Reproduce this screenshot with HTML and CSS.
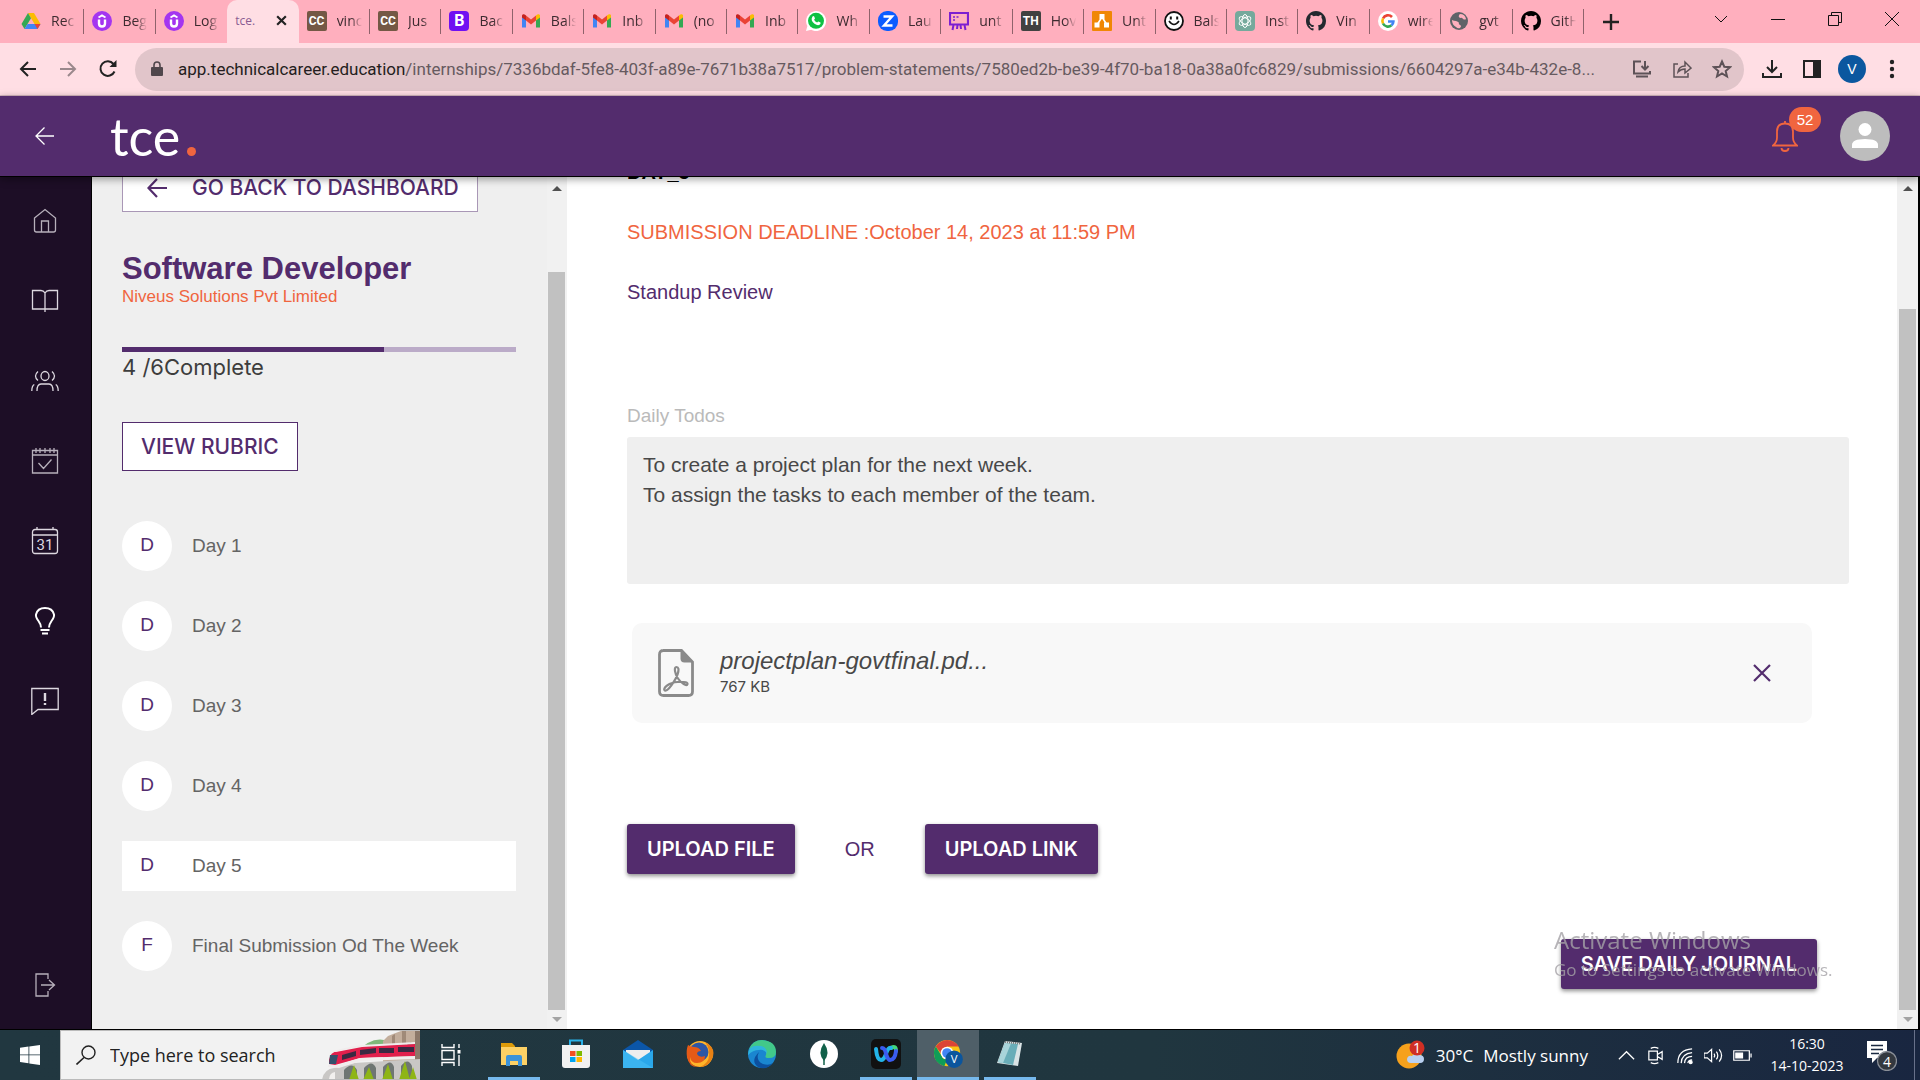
FILE: index.html
```html
<!DOCTYPE html>
<html lang="en">
<head>
<meta charset="utf-8">
<title>tce.</title>
<link rel="stylesheet" href="styles.css">
</head>
<body>
<svg class="defs" aria-hidden="true">
  <symbol id="gmail" viewBox="0 0 20 20"><path fill="#4285f4" d="M1 4v12.500h4V8z"/><path fill="#34a853" d="M19 4v12.500h-4V8z"/><path fill="#ea4335" d="M5 4.500l5 4 5-4V9.500l-5 4-5-4z"/><path fill="#c5221f" d="M1 5c0-2 2-2.500 4-.5v5L1 6.500z"/><path fill="#fbbc04" d="M19 5c0-2-2-2.500-4-.5v5l4-3z"/></symbol>
  <symbol id="udemy" viewBox="0 0 20 20"><circle cx="10" cy="10" r="10" fill="#a435f0"/><path d="M7 8.500v4q0 3 3 3t3-3v-4" fill="none" stroke="#fff" stroke-width="2.400"/><path d="M6.500 6.500L10 4.400l3.500 2.100" fill="none" stroke="#fff" stroke-width="1.800"/></symbol>
  <symbol id="github" viewBox="0 0 16 16"><path d="M8 0C3.580 0 0 3.580 0 8c0 3.540 2.290 6.530 5.470 7.590.4.070.550-.170.550-.380 0-.190-.010-.820-.010-1.490-2.010.370-2.530-.490-2.690-.940-.090-.230-.480-.940-.820-1.130-.280-.150-.680-.520-.010-.530.630-.010 1.080.580 1.230.820.720 1.210 1.870.870 2.330.660.070-.520.280-.870.510-1.070-1.780-.2-3.640-.890-3.640-3.950 0-.870.310-1.590.820-2.150-.080-.2-.360-1.020.080-2.120 0 0 .670-.210 2.200.820a7.600 7.600 0 014 0c1.530-1.040 2.200-.820 2.200-.820.440 1.100.160 1.920.080 2.120.510.560.820 1.270.820 2.150 0 3.070-1.870 3.750-3.650 3.950.290.250.540.730.540 1.480 0 1.070-.010 1.930-.010 2.200 0 .210.150.460.550.380A8 8 0 0016 8c0-4.420-3.580-8-8-8z"/></symbol>
</svg>

<header class="tabstrip">
  <div class="tabs">
    <a class="tab" href="#"><svg viewBox="0 0 20 20"><path fill="#fbbc04" d="M7 2h6l6.500 11h-6z"/><path fill="#34a853" d="M7 2l3 5.200L3.500 18 .5 13z"/><path fill="#4285f4" d="M6.500 13h13l-3 5h-13z"/><path fill="#ea4335" d="M13.500 13h6l-3 5z"/></svg><span>Rec</span></a>
    <a class="tab" href="#"><svg><use href="#udemy"/></svg><span>Beg</span></a>
    <a class="tab no-line" href="#"><svg><use href="#udemy"/></svg><span>Log</span></a>
    <a class="tab active" href="#"><span class="mini">tce.</span><svg viewBox="0 0 12 12" class="close"><path d="M2 2l8 8M10 2l-8 8" stroke="#222" stroke-width="2"/></svg></a>
    <a class="tab" href="#"><i class="fav cc">CC</i><span>vinc</span></a>
    <a class="tab" href="#"><i class="fav cc">CC</i><span>Jus</span></a>
    <a class="tab" href="#"><i class="fav boot">B</i><span>Bac</span></a>
    <a class="tab" href="#"><svg><use href="#gmail"/></svg><span>Bals</span></a>
    <a class="tab" href="#"><svg><use href="#gmail"/></svg><span>Inb</span></a>
    <a class="tab" href="#"><svg><use href="#gmail"/></svg><span>(no</span></a>
    <a class="tab" href="#"><svg><use href="#gmail"/></svg><span>Inb</span></a>
    <a class="tab" href="#"><svg viewBox="0 0 20 20"><path fill="#fff" d="M0 20l1.400-5A10 10 0 115.200 18.800z"/><circle cx="10" cy="9.800" r="8" fill="#0fc143"/><path fill="#fff" d="M6.500 5.500q1-1 1.700 0l.8 1.900-.9 1.400q1 2 3 2.800l1.200-1.200 2.200 1.100q.5 1.200-1 2.300-2 1-5-1-4.500-3.300-2-7.300z"/></svg><span>Wh</span></a>
    <a class="tab" href="#"><svg viewBox="0 0 20 20"><rect width="20" height="20" rx="9" fill="#0b5cff"/><path d="M5.500 5.500h8.500L6 14.500h8.500" fill="none" stroke="#fff" stroke-width="2.400"/></svg><span>Lau</span></a>
    <a class="tab" href="#"><svg viewBox="0 0 20 20"><path d="M1 2h18v11.500H1z" fill="none" stroke="#7c1fd1" stroke-width="2.200"/><path d="M4.500 14l-1 5M8.500 14l-.5 4M11.500 14l.5 4M15.500 14l1 5" stroke="#7c1fd1" stroke-width="2"/><path d="M4 6h2M7.500 6h2M4 9h2" stroke="#7c1fd1" stroke-width="1.600"/></svg><span>unt</span></a>
    <a class="tab" href="#"><i class="fav th">TH</i><span>Hov</span></a>
    <a class="tab" href="#"><svg viewBox="0 0 20 20"><rect width="20" height="20" rx="1" fill="#f08705"/><path d="M10 6L5 14M10 6l5 8" stroke="#fff" stroke-width="1.600"/><path fill="#fff" d="M7.500 3h5v5h-5zM2.500 11.500h5v5h-5zM12 11.500h5v5h-5z"/></svg><span>Unt</span></a>
    <a class="tab" href="#"><svg viewBox="0 0 20 20"><circle cx="10" cy="10" r="9" fill="#fff" stroke="#111" stroke-width="1.800"/><path d="M5 10q5 7 10 0" fill="none" stroke="#111" stroke-width="1.600"/><path d="M6.800 5.500v3M13.200 5.500v3" stroke="#111" stroke-width="2"/></svg><span>Bals</span></a>
    <a class="tab" href="#"><svg viewBox="0 0 20 20"><rect width="20" height="20" rx="4" fill="#75a99c"/><g fill="none" stroke="#fff"><ellipse cx="10" cy="10" rx="3" ry="6.500"/><ellipse cx="10" cy="10" rx="3" ry="6.500" transform="rotate(60 10 10)"/><ellipse cx="10" cy="10" rx="3" ry="6.500" transform="rotate(120 10 10)"/></g></svg><span>Inst</span></a>
    <a class="tab" href="#"><svg fill="#24292f"><use href="#github"/></svg><span>Vin</span></a>
    <a class="tab" href="#"><svg viewBox="0 0 20 20"><circle cx="10" cy="10" r="10" fill="#fff"/><g fill="none" stroke-width="2.600"><path stroke="#ea4335" d="M14 6A5.500 5.500 0 005 7.500"/><path stroke="#fbbc04" d="M5 7.500a5.500 5.500 0 000 5"/><path stroke="#34a853" d="M5 12.500a5.500 5.500 0 008.500 1.800"/><path stroke="#4285f4" d="M13.500 14.300q1.900-1.700 1.900-3.800H10"/></g></svg><span>wire</span></a>
    <a class="tab" href="#"><svg viewBox="0 0 20 20"><circle cx="10" cy="10" r="9" fill="#5f6368"/><path fill="#ffafbe" d="M11 3q5 0 6 5-1 1-3 0-1-2-3-1-2-1-1-3zM3 9q2 1 4 1 3 1 3 2-1 1 1 2 2 1 0 3-2 1-4-1-4-2-4-7z"/></svg><span>gvt</span></a>
    <a class="tab" href="#"><svg fill="#000"><use href="#github"/></svg><span>GitH</span></a>
  </div>
  <button class="newtab" aria-label="New tab"><svg viewBox="0 0 16 16"><path d="M8 0v16M0 8h16" stroke="#222" stroke-width="2.400"/></svg></button>
  <div class="winctl">
    <button aria-label="Search tabs"><svg viewBox="0 0 14 14"><path d="M1 4l6 6 6-6"/></svg></button>
    <button aria-label="Minimize"><svg viewBox="0 0 14 14"><path d="M0 7.500h14"/></svg></button>
    <button aria-label="Restore"><svg viewBox="0 0 14 14"><path d="M.5 3.500h10v10H.5zM3.500 3V.5h10v10H11"/></svg></button>
    <button aria-label="Close"><svg viewBox="0 0 14 14"><path d="M0 0l14 14M14 0L0 14"/></svg></button>
  </div>
</header>

<div class="toolbar">
  <button aria-label="Back"><svg viewBox="0 0 20 20"><path d="M18 10H3M10 3l-7 7 7 7"/></svg></button>
  <button aria-label="Forward" class="dim"><svg viewBox="0 0 20 20"><path d="M2 10h15M10 3l7 7-7 7"/></svg></button>
  <button aria-label="Reload"><svg viewBox="0 0 20 20"><path d="M16.500 12.500A7.300 7.300 0 1115.500 5"/><path d="M18.500 1v7h-7z" fill="#222" stroke="none"/></svg></button>
  <div class="omnibox">
    <svg class="lock" viewBox="0 0 12 16"><path fill="#50474c" d="M1 6h10q1 0 1 1v7q0 1-1 1H1q-1 0-1-1V7q0-1 1-1z"/><path d="M3 6V4q0-3 3-3t3 3v2" fill="none" stroke="#50474c" stroke-width="1.600"/></svg>
    <p class="url"><b>app.technicalcareer.education</b>/internships/7336bdaf-5fe8-403f-a89e-7671b38a7517/problem-statements/7580ed2b-be39-4f70-ba18-0a38a0fc6829/submissions/6604297a-e34b-432e-8...</p>
    <button aria-label="Install"><svg viewBox="0 0 20 20"><path d="M9 2.500H2v12h16V12M4 17.500h12M13 2v8M9.500 7l3.500 3.500L16.500 7"/></svg></button>
    <button aria-label="Share"><svg viewBox="0 0 20 20"><path d="M6 5H2v13h14v-4M6 13q1-6 7-6V3l6 6-6 5v-4q-4 0-7 3z" stroke-width="1.500"/></svg></button>
    <button aria-label="Bookmark"><svg viewBox="0 0 20 20"><path d="M10 2.500l2.300 5.200 5.700.5-4.300 3.800 1.300 5.500-5-3-5 3 1.300-5.500L2 8.200l5.700-.5z"/></svg></button>
  </div>
  <button aria-label="Downloads"><svg viewBox="0 0 20 20"><path d="M10 1v11M5 8l5 5 5-5M1 14v4h18v-4"/></svg></button>
  <button aria-label="Side panel"><svg viewBox="0 0 20 20"><path d="M2 2h16v16H2z"/><path d="M12 2h6v16h-6z" fill="#222"/></svg></button>
  <button class="profile" aria-label="Profile">V</button>
  <button class="kebab" aria-label="Menu"><svg viewBox="0 0 6 20"><g fill="#222" stroke="none"><circle cx="3" cy="3" r="2.200"/><circle cx="3" cy="10" r="2.200"/><circle cx="3" cy="17" r="2.200"/></g></svg></button>
</div>

<div class="appbar">
  <a class="back" href="#" aria-label="Back"><svg viewBox="0 0 20 20"><path d="M19 10H1M9.500 1.500L1 10l8.500 8.500" fill="none" stroke="#fff" stroke-width="1.300"/></svg></a>
  <a class="logo" href="#">tce<i></i></a>
  <button class="bell" aria-label="Notifications"><svg viewBox="0 0 26 32"><g fill="none" stroke="#f0653f" stroke-width="1.800"><path d="M1 25.500q4-3 4-8v-6q0-8 8-8t8 8v6q0 5 4 8z"/><path d="M13 3.500V1M9.500 28q0 3 3.500 3t3.500-3"/></g></svg><span class="badge">52</span></button>
  <button class="avatar" aria-label="Account"><svg viewBox="0 0 50 50"><circle cx="25" cy="18.500" r="6.500"/><path d="M12 37v-3q0-6 13-6t13 6v3z"/></svg></button>
</div>

<div class="body">
  <nav class="rail">
    <a href="#" aria-label="Home"><svg viewBox="0 0 28 28"><path d="M3.500 11L14 2.500 24.500 11v12q0 2-2 2h-17q-2 0-2-2zM10.500 25V14h7v11"/></svg></a>
    <a href="#" aria-label="Courses" class="bright"><svg viewBox="0 0 28 28"><path d="M14 6q-1.500-2.500-4-2.500H1.500V22H14m0-16q1.500-2.500 4-2.500h8.500V22H14M14 5v20"/></svg></a>
    <a href="#" aria-label="People" class="bright"><svg viewBox="0 0 28 28"><ellipse cx="14" cy="9" rx="4" ry="4.500"/><path d="M7 4.500q-5 4.500 0 9M21 4.500q5 4.500 0 9M6 24q0-7 4-7h8q4 0 4 7M.8 24q0-5 2.500-6.500M27.200 24q0-5-2.500-6.500"/></svg></a>
    <a href="#" aria-label="Tasks"><svg viewBox="0 0 28 28"><path d="M1.500 3.500h25V26h-25zM1.500 8h25M5 1v5M9 1v5M14 1v5M19 1v5M23 1v5M7.500 16l5 5.500 8-9"/></svg></a>
    <a href="#" aria-label="Calendar" class="bright"><svg viewBox="0 0 28 28"><rect x="1.500" y="2.500" width="25" height="24" rx="2.500"/><path d="M1.500 8h25M6 0v3M22 0v3"/><text x="14" y="22.500">31</text></svg></a>
    <a href="#" aria-label="Internships" class="current"><svg viewBox="0 0 28 28"><path d="M10 20.500q0-3-2.500-6.500Q4.500 10 5 7.500 6.500 1 14 1t9 6.500q.5 2.500-2.500 6.500-2.500 3.500-2.500 6.500M9.500 23h9M11 26.500h6"/></svg></a>
    <a href="#" aria-label="Feedback" class="bright"><svg viewBox="0 0 28 28"><path d="M.8 1.500h26.400v21H7L.8 27.500z"/><path d="M14 6v8M14 16v2" stroke-width="2.400"/></svg></a>
    <a href="#" aria-label="Log out" class="last"><svg viewBox="0 0 28 28"><path d="M17 8V3H5v22h12v-5M10 14h13M18 9l5.500 5-5.500 5"/></svg></a>
  </nav>

  <aside class="side">
    <div class="side-content">
      <a class="outline dash" href="#"><svg viewBox="0 0 20 20"><path d="M20 10H2M10 1L1.500 10l8.500 9" fill="none" stroke="#532c6d" stroke-width="2.200"/></svg>GO BACK TO DASHBOARD</a>
      <h1>Software Developer</h1>
      <p class="company">Niveus Solutions Pvt Limited</p>
      <div class="progress"><i style="width:66.600%"></i></div>
      <p class="complete">4 /6Complete</p>
      <button class="outline rubric">VIEW RUBRIC</button>
      <ul class="days">
        <li><a href="#"><b>D</b>Day 1</a></li>
        <li><a href="#"><b>D</b>Day 2</a></li>
        <li><a href="#"><b>D</b>Day 3</a></li>
        <li><a href="#"><b>D</b>Day 4</a></li>
        <li class="on"><a href="#"><b>D</b>Day 5</a></li>
        <li><a href="#"><b>F</b>Final Submission Od The Week</a></li>
      </ul>
    </div>
    <div class="scroll side-scroll"><i class="up"></i><i class="thumb"></i><i class="down"></i></div>
  </aside>

  <main>
    <h2>DAY_5</h2>
    <p class="deadline">SUBMISSION DEADLINE :October 14, 2023 at 11:59 PM</p>
    <p class="review">Standup Review</p>
    <label for="todos">Daily Todos</label>
    <textarea id="todos">To create a project plan for the next week.
To assign the tasks to each member of the team.</textarea>
    <div class="file">
      <svg class="pdf" viewBox="0 0 36 48"><path d="M5 1.500h18.500L34.500 13v29.500q0 4-4 4H5.500q-4 0-4-4V5.500q0-4 4-4z" fill="none" stroke="#8a8a8a" stroke-width="2.800"/><path d="M22.500 1L35 13.500h-8.500q-4 0-4-4z" fill="#8a8a8a"/><path d="M18.500 18c-3 0-1.500 7 1.500 11.500s9 8.500 9.500 5.500-12-3-18 0-6.500 7-3.500 6.500S21 27 20.500 20q-.5-2-2-2z" fill="none" stroke="#8a8a8a" stroke-width="2.200"/></svg>
      <div class="meta"><p class="fname">projectplan-govtfinal.pd...</p><p class="fsize">767 KB</p></div>
      <button aria-label="Remove file"><svg viewBox="0 0 18 18"><path d="M1 1l16 16M17 1L1 17" stroke="#532c6d" stroke-width="2.200"/></svg></button>
    </div>
    <div class="uploads"><button class="solid">UPLOAD FILE</button><span>OR</span><button class="solid">UPLOAD LINK</button></div>
    <div class="save"><button class="solid">SAVE DAILY JOURNAL</button>
      <div class="watermark"><p>Activate Windows</p><p class="small">Go to Settings to activate Windows.</p></div>
    </div>
  </main>
  <div class="scroll page-scroll"><i class="up"></i><i class="thumb"></i><i class="down"></i></div>
</div>

<footer class="taskbar">
  <button class="start" aria-label="Start"><svg viewBox="0 0 20 20"><path fill="#fff" d="M0 2.800L8.500 1.600v8H0zM9.300 1.500L20 0v9.600H9.300zM0 10.300h8.500v8L0 17.100zM9.300 10.300H20V20L9.300 18.500z"/></svg></button>
  <label class="search"><svg class="mag" viewBox="0 0 20 20"><circle cx="12.500" cy="7.500" r="6.500" fill="none" stroke="#222" stroke-width="1.400"/><path d="M8 12.500L.5 19.500" stroke="#222" stroke-width="1.600"/></svg><input type="text" placeholder="Type here to search" aria-label="Type here to search">
    <svg class="art" viewBox="0 0 98 49"><path fill="#7fb87a" d="M34 22Q50 4 66 10v12z"/><path fill="#c3ae9c" d="M61 20V10l5-5 5-2 8-3h19v49H61z"/><path fill="#a08a78" d="M70 20V5l3-2v17zM80 0h4v20h-4z"/><path fill="#8c7869" d="M93 0h5v49h-5z"/><path fill="#2b2422" d="M84 19v-4q5-7 9 0v4z"/><path fill="#c9c7c5" d="M0 49q2-11 12-12l20-5 66-4v21z"/><path fill="#f2f0ee" d="M7 49q0-7 6-8v8z"/><path fill="#6f7673" d="M22 49V39q8-9 13 0v10zM42 49V37q8-9 12 0v12zM61 49V36q8-9 11 0v13zM79 49V35q7-9 11 0v14z"/><path fill="#8eb516" d="M32 34l5 15H27zM47 36l5 13H41zM66 33l5 16H60zM83 30l5 19H77zM91 36l4 13h-8z"/><path fill="#e11f4c" d="M7 29q1-8 9-9l24-5 53-2v12l-55 2-25 7-6-1z"/><path fill="#f0ecec" d="M10 21q8-4 30-7l53-3v2l-53 3-26 5zM6 34h10l22-7 55-2v3l-54 2-22 7-11-1z"/><path fill="#34506b" d="M8 24h8l-2 9H7z"/><path fill="#3a2942" d="M20 24l14-4v5l-14 4zM38 19l16-2v5l-16 2zM57 17h15v5H57zM76 16h16v5H76z"/></svg>
  </label>
  <button class="view" aria-label="Task view"><svg viewBox="0 0 20 22"><g fill="none" stroke="#fff" stroke-width="1.400"><path d="M1 0v3.500h12V0M1 22v-3.500h12V22M1 6.500h12v9H1zM18 0v4M18 11v11"/></g><path fill="#fff" d="M16.500 6h3v3.500h-3z"/></svg></button>
  <div class="apps">
    <button class="open" aria-label="File Explorer"><svg viewBox="0 0 30 30"><path fill="#dd9b09" d="M2 4h11l3 3v5H2z"/><path fill="#fdd165" d="M2 8h26v18H2z"/><path fill="#3c93d9" d="M7 18q0-2 2-2h12q2 0 2 2v9h-4v-5h-8v5H7z"/></svg></button>
    <button aria-label="Store"><svg viewBox="0 0 30 30"><path d="M9 6V1.500h12V6" fill="none" stroke="#29b1e8" stroke-width="2"/><path fill="#f1f1f1" d="M1 6h28v20q0 3-3 3H4q-3 0-3-3z"/><path fill="#f25022" d="M9 12h5.500v5H9z"/><path fill="#7fba00" d="M15.500 12H21v5h-5.500z"/><path fill="#00a4ef" d="M9 18h5.500v5H9z"/><path fill="#ffb900" d="M15.500 18H21v5h-5.500z"/></svg></button>
    <button aria-label="Mail"><svg viewBox="0 0 30 30"><path fill="#0b56a8" d="M0 11L15 1l15 10v4H0z"/><path fill="#eee" d="M3 11h24v6l-12 6-12-6z"/><path fill="#2aa7ea" d="M0 11l15 10 15-10v18H0z"/><path fill="#4cc2f6" d="M0 11l30 18H0z" opacity=".5"/></svg></button>
    <button aria-label="Firefox"><svg viewBox="0 0 30 30"><circle cx="15" cy="15" r="13" fill="#ffb52a"/><circle cx="14" cy="13" r="9.500" fill="#2c56a5"/><path fill="#e55a16" d="M3 6q3 2 6 2 5 0 7 4-4 0-4 3 2 4 8 2 0 7-8 7-6 0-7-6-1 9 9 10Q4 29 2 18 1 11 3 6z"/><path fill="#e88114" d="M20 3q12 6 7 17-4 8-12 8 10-4 9-14 0-6-4-11z"/></svg></button>
    <button aria-label="Edge"><svg viewBox="0 0 30 30"><circle cx="15" cy="15" r="14" fill="#1a86d0"/><path fill="#42c88a" d="M2 10Q6 1 15 1q14 1 14 12 0 6-7 6-5 0-3-3 1-7-7-8-6 0-10 2z"/><path fill="#2fb5dd" d="M1 16Q1 5 14 7q6 1 6 8-2-5-8-4-6 0-11 5z"/><path fill="#0c4f9e" d="M12 13q-4 8 4 12 6 2 10-1-7 8-15 4-8-6 1-15z"/></svg></button>
    <button aria-label="MongoDB Compass"><svg viewBox="0 0 30 30"><circle cx="15" cy="15" r="14" fill="#fff"/><path fill="#116149" d="M15 4q7 10 0 18-7-8 0-18z"/><path d="M15 12v14" stroke="#116149" stroke-width="1.500"/></svg></button>
    <button class="open" aria-label="Webex"><svg viewBox="0 0 30 30"><rect width="30" height="30" rx="5" fill="#111"/><g fill="none" stroke-width="4" stroke-linecap="round"><path stroke="#42d67b" d="M20 9q5-3 5 3"/><path stroke="#23b4e8" d="M5 10q1 11 5 11 3 0 5-6 2-7 5-6"/><path stroke="#3a5cf0" d="M11 9q3 0 4 6 2 6 4 6 5 0 6-9"/></g></svg></button>
    <button class="open current" aria-label="Chrome"><svg viewBox="0 0 32 30"><circle cx="15" cy="14" r="14" fill="#f9c513"/><path fill="#db4437" d="M3 7Q8 0 15 0q8 0 12.500 7H15l-6 8z"/><path fill="#0f9d58" d="M3 7l8 13 4 1-3 7Q1 25 1 14q0-4 2-7z"/><circle cx="15" cy="14" r="6.800" fill="#fff"/><circle cx="15" cy="14" r="5.200" fill="#4285f4"/><circle cx="22.500" cy="20.500" r="9.300" fill="#0b559d"/><text x="22.500" y="25">V</text></svg></button>
    <button class="open" aria-label="Notepad"><svg viewBox="0 0 30 30"><path fill="#d9e3e5" d="M10 2l17 2-4 23-21-3z"/><path fill="#69adb8" d="M10 4l13 1-5 21-15-3z"/><path fill="#a9d4da" d="M10 4l6 .5L8 24l-5-1z"/><path d="M10 3l15 1.500" stroke="#777" stroke-width="2" stroke-dasharray="1 1"/></svg></button>
  </div>
  <div class="tray">
    <button class="weather"><svg viewBox="0 0 30 30"><circle cx="13" cy="16" r="12.500" fill="#f6a11c"/><path fill="#b9d0f0" d="M15 23q-4 0-4-4 1-4 5-3 3-4 7-1 5 0 5 4t-4 4z"/><circle cx="21" cy="8" r="7.500" fill="#d02f24"/><text x="21" y="13">1</text></svg><span>30°C</span><span>Mostly sunny</span></button>
    <button aria-label="Hidden icons"><svg viewBox="0 0 20 20"><path d="M2 14l8-8 8 8"/></svg></button>
    <button aria-label="Meet now"><svg viewBox="0 0 20 20"><path d="M3 5.500h9v9H3zM12 9l5-3v8l-5-3M5 2.500q4-2 8 0M5 17.500q4 2 8 0"/></svg></button>
    <button aria-label="Network"><svg viewBox="0 0 20 20"><path d="M3 18Q3 4 18 3M6.500 18Q7 8 18 7M10 18q.5-7 8-7M13.500 18q.5-3.500 4.500-3.500"/><circle cx="16.500" cy="17" r="1.500" fill="#fff"/></svg></button>
    <button aria-label="Volume"><svg viewBox="0 0 20 20"><path d="M0 7.500h3.500L8 3.500v13l-4.500-4H0zM10.500 8q1.500 2 0 4M13 6q3 4 0 8M16 3.500q5 6.500 0 13"/></svg></button>
    <button aria-label="Battery"><svg viewBox="0 0 20 20"><path d="M.8 5h16.400v10H.8zM19 8v4"/><path fill="#fff" d="M3 7.500h7v5H3z"/></svg></button>
    <button class="clock"><span>16:30</span><span>14-10-2023</span></button>
    <button class="notes" aria-label="Notifications"><svg viewBox="0 0 30 32"><path fill="#fff" d="M0 2h20v17H10l-5 5v-5H0z"/><path d="M4 6.500h12M4 10.500h12M4 14.500h8" stroke="#1a2941" stroke-width="1.400"/><circle cx="20" cy="22" r="9.500" fill="#33383f" stroke="#8a8f98"/><text x="20" y="27.500">4</text></svg></button>
  </div>
</footer>
</body>
</html>
```
FILE: styles.css
```css
* { box-sizing: border-box; }
html, body { height: 100%; }
body {
  margin: 0;
  display: flex;
  flex-direction: column;
  overflow: hidden;
  background: #fff;
  font-family: "Liberation Sans", Arial, sans-serif;
  font-size: 20px;
  color: #532c6d;
}
h1, h2, p, ul { margin: 0; padding: 0; }
ul { list-style: none; }
a { color: inherit; text-decoration: none; }
button { border: 0; padding: 0; background: none; font: inherit; color: inherit; display: flex; align-items: center; justify-content: center; }
svg { display: block; flex: none; }
.defs { position: absolute; width: 0; height: 0; }

/* browser tabs */
.tabstrip { flex: none; height: 43px; display: flex; background: #ffafbe; font-family: "Open Sans", "Noto Sans", sans-serif; font-size: 14px; color: #3d2b30; }
.tabs { flex: 0 0 82.5%; display: flex; padding-left: 13px; }
.tab { flex: 1 1 0; min-width: 0; display: flex; align-items: center; gap: 10px; padding: 0 0 2px 8px; overflow: hidden; background: linear-gradient(#8f626b, #8f626b) right 9px / 1px 25px no-repeat; }
.tab.no-line { background: none; }
.tab svg, .fav { width: 20px; height: 20px; flex: none; }
.tab span { width: 28px; overflow: hidden; white-space: nowrap; -webkit-mask-image: linear-gradient(90deg, #000 50%, transparent 90%); mask-image: linear-gradient(90deg, #000 50%, transparent 90%); }
.tab.active { background: #ffdee4; border-radius: 10px 10px 0 0; gap: 16px; }
.tab .mini { width: 24px; overflow: visible; font-size: 12px; color: #8a5c92; -webkit-mask-image: none; mask-image: none; }
.tab .close { width: 13px; height: 13px; }
.fav { display: flex; align-items: center; justify-content: center; font: bold 12px "Roboto", sans-serif; color: #fff; border-radius: 2px; }
.cc { background: #745845; }
.boot { background: #7010f2; font-size: 16px; border-radius: 4px; }
.th { background: #414141; }
.newtab { width: 54px; }
.newtab svg { width: 16px; height: 16px; }
.winctl { margin-left: auto; display: flex; }
.winctl button { width: 57px; height: 38px; }
.winctl svg { width: 14px; height: 14px; fill: none; stroke: #111; }

/* address row */
.toolbar { flex: none; height: 53px; display: flex; align-items: center; padding: 0 8px; background: #ffdee4; border-bottom: 1px solid #d7b9c0; }
.toolbar button { width: 40px; height: 40px; }
.toolbar svg { width: 20px; height: 20px; fill: none; stroke: #222; stroke-width: 2; }
.toolbar .dim { opacity: .45; }
.omnibox { flex: 1; min-width: 0; height: 43px; margin: 0 8px 0 7px; padding: 0 2px 0 16px; display: flex; align-items: center; border-radius: 22px; background: #e1c5ca; }
.omnibox svg { stroke: #5d5257; }
.omnibox .lock { width: 12px; height: 16px; margin-right: 15px; stroke: none; }
.url { flex: 1; min-width: 0; overflow: hidden; white-space: nowrap; text-overflow: ellipsis; font: 17px/24px "Roboto", sans-serif; color: #665a5f; }
.url b { font-weight: 400; color: #241d20; }
.toolbar .profile { width: 28px; height: 28px; margin: 0 6px; border-radius: 50%; background: #0b579f; color: #fff; font-size: 14px; }
.toolbar .kebab svg { width: 6px; }

/* application header */
.appbar { flex: none; height: 81px; display: flex; align-items: center; padding-right: 30px; background: #532c6d; border-bottom: 1px solid #000; box-shadow: 0 2px 8px rgba(0,0,0,.4); position: relative; z-index: 2; }
.back { width: 90px; display: flex; justify-content: center; }
.back svg { width: 20px; height: 20px; }
.logo { display: flex; align-items: baseline; margin-left: 20px; font: 400 52px/60px "Lato", sans-serif; color: #fff; }
.logo i { width: 9px; height: 9px; margin-left: 7px; border-radius: 50%; background: #f0653f; }
.bell { margin-left: auto; position: relative; }
.bell svg { width: 26px; height: 32px; }
.badge { position: absolute; left: 17px; top: -13px; width: 32px; height: 25px; border-radius: 13px; background: #f0653f; color: #fff; font: 15px/25px "Liberation Sans", sans-serif; }
.avatar { width: 50px; height: 50px; margin-left: 42px; border-radius: 50%; background: #bdbdbd; }
.avatar svg { width: 50px; height: 50px; fill: #fff; }

/* page body */
.body { flex: 1; min-height: 0; display: flex; border-bottom: 1px solid #000; border-right: 2px solid #000; }
.rail { flex: none; width: 92px; display: flex; flex-direction: column; align-items: center; padding: 30px 2px 30px 0; gap: 52px; background: #1d0e26; border-right: 1px solid #000; }
.rail svg { width: 28px; height: 28px; fill: none; stroke: #b7b0bb; stroke-width: 1.300; }
.rail .bright svg { stroke: #ddd8e0; }
.rail .current svg { stroke: #fff; stroke-width: 2; }
.rail text { font: 15px "Roboto", sans-serif; text-anchor: middle; fill: #ddd8e0; stroke: none; }
.rail .last { margin-top: auto; }

.side { flex: none; width: 475px; display: flex; background: #efefef; }
.side-content { flex: 1; min-width: 0; padding: 0 31px 0 30px; margin-top: -14px; }
.outline { width: max-content; height: 49px; padding: 0 18px; display: flex; align-items: center; background: #fff; border: 1px solid #532c6d; font: 500 21px "Inter", sans-serif; }
.dash { gap: 25px; padding-left: 24px; border-color: #a997b6; }
.dash svg { width: 20px; height: 20px; }
h1 { margin-top: 39px; font-size: 31px; line-height: 36px; }
.company { font-size: 17px; line-height: 20px; color: #f0653f; }
.progress { margin-top: 40px; height: 5px; background: #bbabc8; }
.progress i { display: block; height: 5px; background: #532c6d; }
.complete { font: 22px/30px "Inter", sans-serif; color: #3d3d3d; }
.rubric { margin-top: 40px; }
.days { margin-top: 50px; display: grid; gap: 30px; }
.days a { display: flex; align-items: center; gap: 20px; height: 50px; font-size: 19px; color: #646464; }
.days b { width: 50px; height: 50px; border-radius: 50%; background: #fff; color: #532c6d; font-weight: 400; line-height: 48px; text-align: center; }
.days .on { background: #fff; }

.scroll { flex: none; display: flex; flex-direction: column; align-items: center; background: #f1f1f1; }
.scroll i { border: 5px solid transparent; }
.scroll .up { border-top: 0; border-bottom-color: #505050; }
.scroll .down { border-bottom: 0; border-top-color: #a3a3a3; margin: 7px 0; }
.scroll .thumb { flex: 1; width: 17px; border: 0; background: #c1c1c1; }
.side-scroll { width: 20px; padding: 9px 1px 0 0; }
.side-scroll .up { margin-bottom: 81px; }
.page-scroll { width: 21px; padding-top: 9px; }
.page-scroll .up { margin-bottom: 118px; }

main { flex: 1; min-width: 0; padding: 0 48px 0 60px; background: #fff; }
h2 { margin-top: -17px; font-size: 20px; line-height: 24px; color: #000; }
.deadline { margin-top: 33px; line-height: 30px; color: #f0653f; }
.review { margin-top: 30px; line-height: 30px; }
main label { display: block; margin-top: 99px; font-size: 19px; line-height: 20px; color: #bababa; }
textarea { display: block; width: 100%; height: 147px; margin-top: 11px; padding: 13px 16px; border: 0; border-radius: 3px; resize: none; background: #efefef; color: #484848; font: 21px/30px "Liberation Sans", Arial, sans-serif; }
.file { display: flex; align-items: center; height: 100px; margin: 39px 37px 0 5px; padding: 0 41px 0 26px; border-radius: 10px; background: #f8f8f8; color: #484848; }
.pdf { width: 36px; height: 48px; }
.meta { flex: 1; padding-left: 26px; }
.fname { font-size: 24px; line-height: 28px; font-style: italic; }
.fsize { font: 15px/24px "Inter", sans-serif; }
.file button svg { width: 18px; height: 18px; }
.uploads { display: flex; align-items: center; gap: 50px; margin-top: 101px; }
.solid { height: 50px; padding: 0 20px; border-radius: 3px; background: #532c6d; color: #fff; font: 600 20px "Inter", sans-serif; box-shadow: 0 2px 4px rgba(0,0,0,.45); }
.save { position: relative; display: flex; justify-content: flex-end; margin: 65px 32px 0 0; }
.watermark { position: absolute; right: -22px; top: -16px; width: 285px; color: #a5a2a7; opacity: .8; white-space: nowrap; font: 24px/34px "Open Sans", sans-serif; pointer-events: none; }
.watermark .small { font-size: 17px; line-height: 26px; }

/* desktop taskbar */
.taskbar { flex: none; height: 50px; display: flex; background: linear-gradient(90deg, #213740, #20363f 60%, #192640); color: #fff; font-family: "Open Sans", "Noto Sans", sans-serif; }
.start { width: 60px; }
.start svg { width: 20px; height: 20px; }
.search { width: 360px; display: flex; align-items: center; padding-left: 15px; background: #f2f2f2; border: 1px solid #bbb; border-right: 0; overflow: hidden; }
.mag { width: 20px; height: 20px; }
.search input { flex: 1; min-width: 0; margin-left: 14px; padding: 0; border: 0; background: none; font: 18px "Open Sans", sans-serif; color: #222; }
.search input::placeholder { color: #222; opacity: 1; }
.art { width: 98px; height: 49px; }
.view { width: 62px; }
.view svg { width: 20px; height: 22px; }
.apps { display: flex; padding-left: 1px; }
.apps button { width: 62px; border-bottom: 3px solid transparent; }
.apps svg { width: 30px; height: 30px; }
.apps .open { border: 0; padding-bottom: 3px; background: linear-gradient(#76b9ed, #76b9ed) center bottom / 52px 3px no-repeat; }
.apps .current { background-color: #4f5f68; background-size: 62px 3px; }
.apps text { font: 12px "Open Sans", sans-serif; text-anchor: middle; fill: #fff; }
.tray { margin-left: auto; display: flex; margin-right: 5px; padding-right: 17px; border-right: 1px solid #68718a; }
.tray button { width: 29px; }
.tray svg { width: 19px; height: 19px; fill: none; stroke: #fff; stroke-width: 1.300; }
.tray .weather { width: auto; gap: 10px; margin-right: 24px; font-size: 17px; }
.weather svg { width: 30px; height: 30px; stroke: none; }
.tray text { font: 14px "Open Sans", sans-serif; text-anchor: middle; fill: #fff; stroke: none; }
.tray .clock { width: 96px; flex-direction: column; margin: 0 4px 0 2px; font-size: 14px; line-height: 22px; }
.tray .notes { width: 30px; margin-left: 8px; }
.notes svg { width: 30px; height: 32px; stroke: none; }
```
